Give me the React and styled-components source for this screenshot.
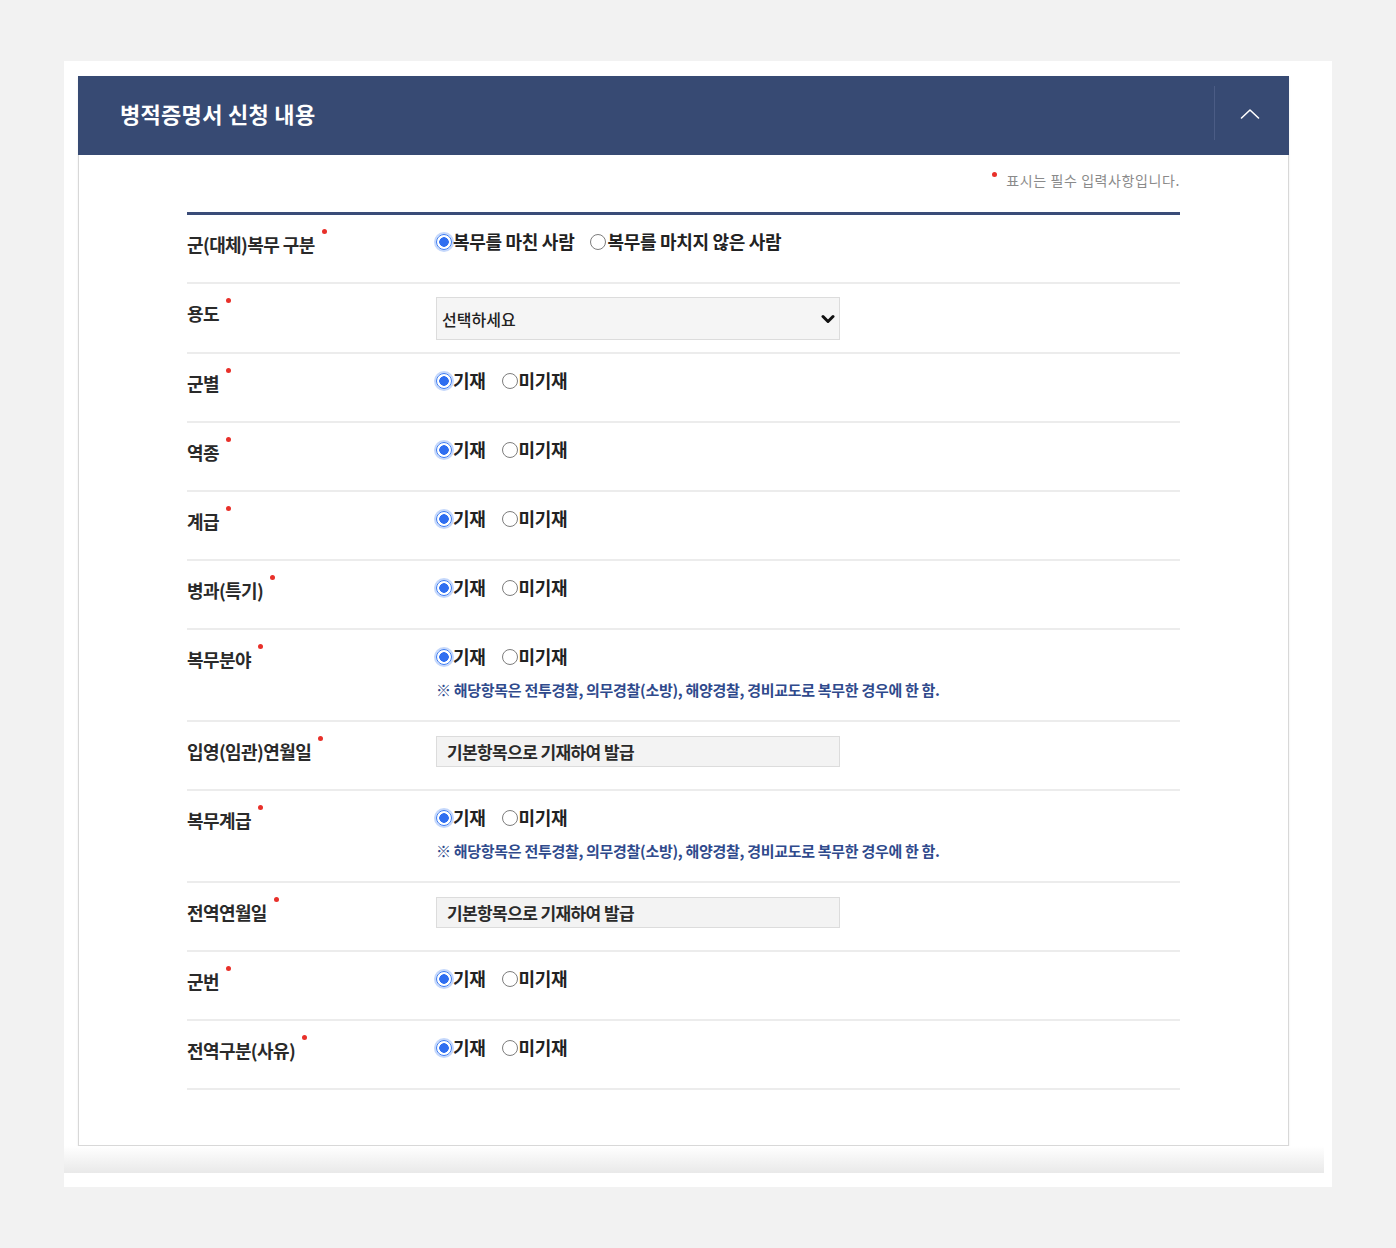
import { useState } from "react";
import styled, { createGlobalStyle } from "styled-components";

const GlobalStyle = createGlobalStyle`
  body {
    margin: 0;
    background: #f2f2f2;
    font-family: "Noto Sans CJK KR", "Noto Sans", sans-serif;
  }
  * {
    box-sizing: border-box;
  }
`;

const NOTE = "※ 해당항목은 전투경찰, 의무경찰(소방), 해양경찰, 경비교도로 복무한 경우에 한 함.";
const FIXED = "기본항목으로 기재하여 발급";

const fields = [
  { id: "service", label: "군(대체)복무 구분", type: "radio", options: ["복무를 마친 사람", "복무를 마치지 않은 사람"] },
  { id: "purpose", label: "용도", type: "select" },
  { id: "branch", label: "군별", type: "radio" },
  { id: "kind", label: "역종", type: "radio" },
  { id: "rank", label: "계급", type: "radio" },
  { id: "specialty", label: "병과(특기)", type: "radio" },
  { id: "field", label: "복무분야", type: "radio", note: true },
  { id: "enlist", label: "입영(임관)연월일", type: "fixed" },
  { id: "serviceRank", label: "복무계급", type: "radio", note: true },
  { id: "discharge", label: "전역연월일", type: "fixed" },
  { id: "number", label: "군번", type: "radio" },
  { id: "reason", label: "전역구분(사유)", type: "radio" },
];

export default function App() {
  const [open, setOpen] = useState(true);
  const [values, setValues] = useState(() =>
    Object.fromEntries(fields.map((field) => [field.id, 0]))
  );

  function handleChange(id, index) {
    setValues((previous) => ({ ...previous, [id]: index }));
  }

  return (
    <>
      <GlobalStyle />
      <Panel>
        <Card>
          <Header>
            <Title>병적증명서 신청 내용</Title>
            <ToggleButton type="button" aria-label="접기" onClick={() => setOpen(!open)}>
              <svg width="20" height="11" viewBox="0 0 20 11" fill="none">
                <polyline
                  points="1.5,10 10,2 18.5,10"
                  stroke="#ffffff"
                  strokeWidth="1.6"
                  strokeLinecap="round"
                  strokeLinejoin="round"
                />
              </svg>
            </ToggleButton>
          </Header>
          {open && (
            <Body>
              <RequiredNote>
                <NoteDot />
                표시는 필수 입력사항입니다.
              </RequiredNote>
              <Table>
                {fields.map((field) => (
                  <Row key={field.id}>
                    <Label>
                      {field.label}
                      <Dot />
                    </Label>
                    <Value>
                      {field.type === "radio" && (
                        <RadioGroup>
                          {(field.options || ["기재", "미기재"]).map((option, index) => (
                            <RadioLabel key={option}>
                              <Radio
                                type="radio"
                                name={field.id}
                                checked={values[field.id] === index}
                                onChange={() => handleChange(field.id, index)}
                              />
                              {option}
                            </RadioLabel>
                          ))}
                        </RadioGroup>
                      )}
                      {field.type === "select" && (
                        <SelectWrap>
                          <Select defaultValue="">
                            <option value="">선택하세요</option>
                            <option value="1">취업용</option>
                            <option value="2">제출용</option>
                          </Select>
                          <SelectArrow width="14" height="10" viewBox="0 0 14 10" fill="none">
                            <polyline
                              points="2,2.5 7,7.5 12,2.5"
                              stroke="#111"
                              strokeWidth="3"
                              strokeLinecap="round"
                              strokeLinejoin="round"
                            />
                          </SelectArrow>
                        </SelectWrap>
                      )}
                      {field.type === "fixed" && <FixedInput readOnly value={FIXED} />}
                      {field.note && <Notice>{NOTE}</Notice>}
                    </Value>
                  </Row>
                ))}
              </Table>
            </Body>
          )}
        </Card>
        <Shade />
      </Panel>
    </>
  );
}

const Panel = styled.div`
  width: 1268px;
  margin: 61px 0 0 64px;
  padding: 15px 43px 14px 14px;
  background: #ffffff;
`;

const Card = styled.section`
  border: 1px solid #d8d8d8;
  border-top: none;
  background: #ffffff;
  box-shadow: 0 1px 2px rgba(0, 0, 0, 0.08);
`;

const Header = styled.header`
  display: flex;
  align-items: center;
  height: 79px;
  margin: 0 -1px;
  background: #374a73;
`;

const Title = styled.h2`
  flex: 1;
  margin: 0 0 5px;
  padding-left: 42px;
  color: #ffffff;
  font-size: 22px;
  font-weight: 700;
  letter-spacing: 0.3px;
`;

const ToggleButton = styled.button`
  display: flex;
  align-items: center;
  justify-content: center;
  width: 71px;
  height: 54px;
  margin: 0 4px 5px 0;
  padding: 0;
  border: none;
  border-left: 1px solid #4b5c85;
  background: transparent;
  cursor: pointer;
`;

const Body = styled.div`
  padding: 14px 108px 55px 108px;
`;

const RequiredNote = styled.p`
  display: flex;
  justify-content: flex-end;
  align-items: flex-start;
  margin: 0 0 21px;
  color: #8a8a8a;
  font-size: 14px;
  line-height: 22px;
  letter-spacing: 0.6px;
`;

const Dot = styled.span`
  display: inline-block;
  width: 5px;
  height: 5px;
  margin-left: 7px;
  border-radius: 50%;
  background: #e8302a;
  vertical-align: top;
  position: relative;
  top: -2px;
`;

const NoteDot = styled(Dot)`
  margin: 0 9px 0 0;
  top: 3px;
`;

const Table = styled.div`
  border-top: 3px solid #3a4c78;
`;

const Row = styled.div`
  display: grid;
  grid-template-columns: 249px 1fr;
  min-height: 69px;
  border-bottom: 2px solid #ececec;
`;

const Label = styled.div`
  padding-top: 16px;
  color: #2a2a2a;
  font-size: 18px;
  font-weight: 700;
  line-height: 26px;
  letter-spacing: -0.6px;
`;

const Value = styled.div`
  padding: 12px 0;
`;

const RadioGroup = styled.div`
  display: flex;
  align-items: center;
  gap: 16px;
  height: 28px;
`;

const RadioLabel = styled.label`
  display: flex;
  align-items: center;
  color: #222222;
  font-size: 18px;
  font-weight: 700;
  letter-spacing: -0.3px;
  cursor: pointer;
`;

const Radio = styled.input`
  appearance: none;
  width: 16px;
  height: 16px;
  margin: 2px 1px 0 0;
  border: 1px solid #7d7d7d;
  border-radius: 50%;
  background: #ffffff;
  cursor: pointer;

  &:checked {
    border: 1.5px solid #3d7cf2;
    background: radial-gradient(circle, #2f6ef0 0 4.5px, #ffffff 5px);
    box-shadow: 0 0 0 2px rgba(61, 124, 242, 0.3);
  }
`;

const SelectWrap = styled.div`
  position: relative;
  width: 404px;
  margin-top: 1px;
`;

const Select = styled.select`
  appearance: none;
  display: block;
  width: 100%;
  height: 43px;
  padding: 0 36px 0 5px;
  border: 1px solid #dcdcdc;
  background: #f5f5f5;
  color: #222222;
  font-family: inherit;
  font-size: 16px;
  font-weight: 500;
  letter-spacing: 0;
`;

const SelectArrow = styled.svg`
  position: absolute;
  right: 5px;
  top: 17px;
  pointer-events: none;
`;

const FixedInput = styled.input`
  display: block;
  width: 404px;
  height: 31px;
  margin-top: 2px;
  padding: 0 10px;
  border: 1px solid #dcdcdc;
  background: #f3f3f3;
  color: #2a2a2a;
  font-family: inherit;
  font-size: 17px;
  font-weight: 700;
  letter-spacing: -0.6px;
  outline: none;
`;

const Notice = styled.p`
  margin: 10px 0 8px;
  color: #2f4a8c;
  font-size: 15px;
  font-weight: 700;
  line-height: 20px;
  letter-spacing: -0.3px;
`;

const Shade = styled.div`
  width: 1260px;
  height: 27px;
  margin-left: -14px;
  background: linear-gradient(#ffffff, #e9e9e9);
`;
